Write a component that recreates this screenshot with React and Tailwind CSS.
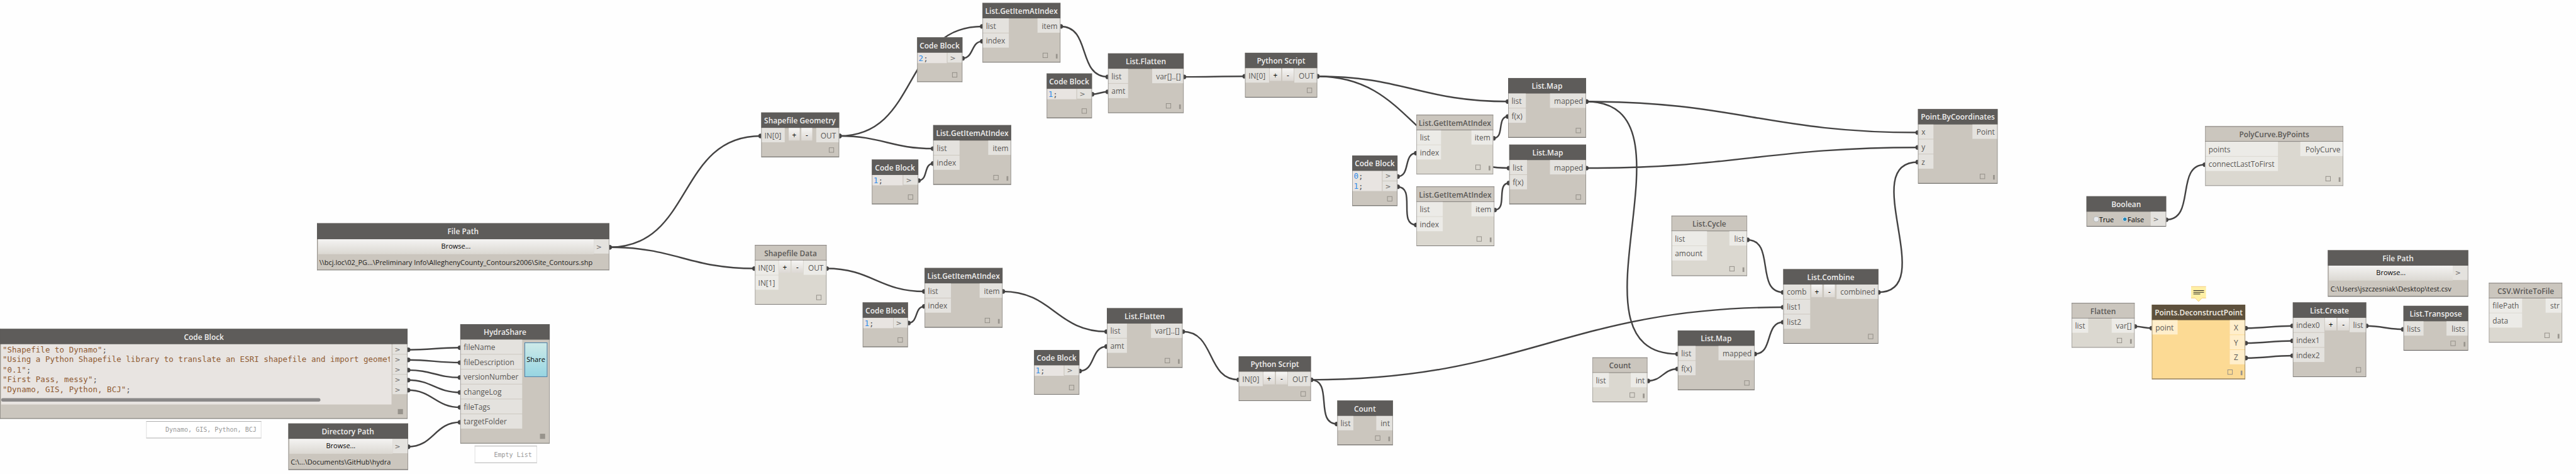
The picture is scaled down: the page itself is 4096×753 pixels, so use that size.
import React from "react";

const THEMES = {
  dark: { head: "bg-[#5e5c5a] text-[#f0efee]", body: "bg-[#cbc6be]", port: "bg-[#e4e2de]", edge: "after:border-x-[#5e5c5a]/50 after:border-b-[#5e5c5a]" },
  light: { head: "bg-[#cbc6be] text-[#5a5856] border-y border-[#7f7b78]", body: "bg-[#dbd8d0]", port: "bg-[#ecebe7]", edge: "after:border-x-[#7f7b78]/60 after:border-b-[#7f7b78]" },
  warn: { head: "bg-[#5e513d] text-[#f4f0e6]", body: "bg-[#fcda94]", port: "bg-[#ffeecb]", edge: "after:border-x-[#5e513d]/60 after:border-b-[#5e513d]" },
};

function Shell({ x, y, w, h, t = "dark", title, head = 27, children }) {
  const c = THEMES[t];
  return (
    <section
      className={`absolute flex flex-col ${c.body} after:pointer-events-none after:absolute after:inset-0 after:border-x-[1.5px] after:border-b ${c.edge}`}
      style={{ left: x, top: y, width: w, height: h }}
    >
      <header className={`flex shrink-0 items-center justify-center pt-[2px] text-[13.1px] leading-none font-semibold whitespace-nowrap ${c.head}`} style={{ height: head }}>
        {title}
      </header>
      {children}
    </section>
  );
}

function Footer({ bar, solid }) {
  return (
    <div className="mt-auto flex items-end justify-end">
      <span className={solid ? "mr-[8px] mb-[8px] size-[9.5px] bg-[#97938c]" : `mb-[8px] size-[9px] border border-[#8f8b84] ${bar ? "mr-[14px]" : "mr-[9px]"}`} />
      {bar && <span className="mr-[5px] mb-[7px] h-[8px] w-[3px] bg-[#99958e]" />}
    </div>
  );
}

function Step({ children }) {
  return (
    <span className="flex h-[22px] w-[19.5px] items-center justify-center bg-linear-to-b from-[#f6f5f4] to-[#dcd8d3] pt-[2px] text-[13px] leading-none font-medium text-black">{children}</span>
  );
}

function Node({ ins, outs, iw, ow, steps, bar, solid, t = "dark", extra, ...rest }) {
  const port = THEMES[t].port;
  return (
    <Shell t={t} {...rest}>
      <div className="flex items-start justify-between text-[13.1px] leading-none text-[#5a5856]">
        <div className="flex flex-col gap-px" style={{ width: iw }}>
          {ins.map((p) => (
            <span key={p} className={`flex h-[25px] items-center pt-[2px] pl-[6px] ${port}`}>{p}</span>
          ))}
        </div>
        {steps && (
          <div className="flex flex-1 justify-center gap-[2.5px]">
            <Step>+</Step>
            <Step>-</Step>
          </div>
        )}
        {extra}
        {outs && (
          <div className="flex flex-col gap-px" style={{ width: ow }}>
            {outs.map((p) => (
              <span key={p} className={`flex h-[25px] items-center pt-[2px] ${ow < 28 ? "justify-center pr-[6px]" : "justify-end pr-[5px]"} ${port}`}>{p}</span>
            ))}
          </div>
        )}
      </div>
      <Footer bar={bar} solid={solid} />
    </Shell>
  );
}

function Out({ h = "h-[25px]" }) {
  return <span className={`flex items-center bg-[#e4e2de] pt-[1px] pl-[4px] font-['DejaVu_Sans',sans-serif] text-[12px] leading-none text-[#6a6866] ${h}`}>&gt;</span>;
}

function CodeBlock({ x, y, h = 77.7, w = 79.3, lines, pw = 26.5 }) {
  return (
    <Shell x={x} y={y} w={w} h={h} title="Code Block">
      <div className="flex items-start">
        <div className="flex flex-1 flex-col bg-[#e8e4e1] pl-[3px] font-['DejaVu_Sans_Mono',monospace] text-[13.77px]">
          {lines.map((n) => (
            <span key={n} className="flex h-[17.6px] items-center pt-[1.4px] leading-none text-[#555]">
              <span className="text-[#2f8be8]">{n}</span>;
            </span>
          ))}
        </div>
        <div className="flex flex-col gap-px border-l border-[#cbc6be]" style={{ width: pw }}>
          {lines.map((n) => (
            <Out key={n} h="h-[17px]" />
          ))}
        </div>
      </div>
      <Footer />
    </Shell>
  );
}

function PathNode({ title, path, pw, head, ...r }) {
  return (
    <Shell title={title} head={head} {...r}>
      <div className="flex flex-1 items-start text-[12.05px] leading-none whitespace-nowrap">
        <div className="flex h-full flex-1 flex-col pl-[2px]">
          <span className="flex h-[26px] items-center justify-center bg-linear-to-b from-[#f4f3f2] to-[#dbd8d2] pb-[1.6px] text-black">Browse...</span>
          <span className="flex flex-1 items-center justify-center pt-[2.5px] text-[#1c1b1a]">{path}</span>
        </div>
        <div style={{ width: pw }}>
          <Out />
        </div>
      </div>
    </Shell>
  );
}

const SOURCE = [
  ["\"Shapefile to Dynamo\"", ";"],
  ["\"Using a Python Shapefile library to translate an ESRI shapefile and import geomet", ""],
  ["\"0.1\"", ";"],
  ["\"First Pass, messy\"", ";"],
  ["\"Dynamo, GIS, Python, BCJ\"", ";"],
];

function SourceBlock() {
  return (
    <Shell x={0} y={573} w={711.4} h={157} title="Code Block">
      <div className="flex items-start">
        <div className="ml-[2px] flex h-[105px] w-[681px] flex-col overflow-hidden bg-[#e8e4e1] font-['DejaVu_Sans_Mono',monospace] text-[13.77px]">
          {SOURCE.map(([s, e]) => (
            <span key={s} className="flex h-[17.6px] w-[677.5px] shrink-0 items-center overflow-hidden pt-[1.4px] pl-[2.3px] leading-none whitespace-pre text-[#8f5b33]">
              {s}<span className="text-[#555]">{e}</span>
            </span>
          ))}
          <span className="mt-[5.7px] h-[6.3px] w-[557px] shrink-0 rounded-[3px] bg-[#8a8888]" />
        </div>
        <div className="ml-[1.5px] flex flex-1 flex-col gap-[0.6px]">
          {SOURCE.map(([s]) => (
            <Out key={s} h="h-[17px]" />
          ))}
        </div>
      </div>
      <Footer solid />
    </Shell>
  );
}

function Bubble({ x, y, w, h, children }) {
  return (
    <div className="absolute flex items-center justify-end border border-x-[#dcdcdc] border-y-[#a8a8a8] bg-white pr-[8px] font-['DejaVu_Sans_Mono',monospace] text-[11px] leading-none whitespace-pre text-[#999]" style={{ left: x, top: y, width: w, height: h }}>
      {children}
    </div>
  );
}

function Radio({ on, children }) {
  return (
    <span className="flex items-center text-[12.1px] leading-none text-black">
      <span className="flex size-[10px] items-center justify-center rounded-full border border-[#b0b4b8] bg-[#e9ebee]">
        {on && <span className="size-[6px] rounded-full bg-[#1f86b8]" />}
      </span>
      <span className="pt-[3px]">{children}</span>
    </span>
  );
}

const WIRES = [
  [711.5, 609.7, 803, 606], [711.5, 627.3, 803, 632], [711.5, 645, 803, 658], [711.5, 662.5, 803, 684], [711.5, 680, 803, 710],
  [711.5, 778.7, 803, 736],
  [1063, 431, 1327.5, 237], [1063, 431, 1316.7, 468],
  [1464, 237, 1714, 46], [1464, 237, 1628.3, 259],
  [1678.7, 101.7, 1714, 72], [1602, 314.7, 1628.3, 285],
  [1850, 46, 1933, 134], [1904.7, 164.3, 1933, 160], [2065, 134, 2172, 133],
  [1441.7, 468, 1613, 508], [1584.4, 563, 1613, 534], [1749, 508, 1931, 578], [1883, 646.7, 1931, 604], [2063, 578, 2161.5, 662],
  [2297.6, 133, 2631, 177], [2297.6, 133, 2633, 293],
  [2437.8, 307.7, 2471, 267], [2437.8, 325.5, 2471, 392],
  [2605, 241, 2631, 203], [2607, 366, 2633, 319],
  [2767, 177, 3346, 231], [2767, 177, 2927, 617], [2767, 293, 3346, 257],
  [2286.7, 662, 3111.3, 535.5], [2286.7, 662, 2332.7, 739],
  [3048, 418, 3111.3, 509.5], [3061, 617, 3111.3, 561.5], [2874.4, 664, 2927, 643], [3276.6, 509.5, 3346, 282.5],
  [3778.6, 383, 3847, 287],
  [3724, 569, 3754.3, 572],
  [3917.3, 572, 4000, 568], [3917.3, 598, 4000, 594], [3917.3, 624, 4000, 620],
  [4127.7, 568, 4193, 574],
];

function Wires() {
  return (
    <svg className="absolute inset-0" width="4494" height="826" fill="none">
      {WIRES.map(([a, b, c, d], i) => {
        const o = 0.45 * Math.hypot(c - a, d - b);
        return (
          <g key={i}>
            <path d={`M${a} ${b}C${a + o} ${b} ${c - o} ${d} ${c} ${d}`} stroke="#444343" strokeWidth="2.7" />
            <circle cx={a + 0.5} cy={b} r="4" fill="#444343" />
            <circle cx={c - 0.5} cy={d} r="4" fill="#444343" />
          </g>
        );
      })}
    </svg>
  );
}

const GI = { title: "List.GetItemAtIndex", ins: ["list", "index"], outs: ["item"], iw: 46, ow: 40, w: 136, h: 104, bar: true };
const FL = { title: "List.Flatten", ins: ["list", "amt"], outs: ["var[]..[]"], iw: 35.4, ow: 55, w: 132, h: 104, bar: true };
const PY = { title: "Python Script", ins: ["IN[0]"], outs: ["OUT"], iw: 41.7, ow: 39.7, w: 125.4, h: 78, steps: true };
const MP = { title: "List.Map", ins: ["list", "f(x)"], outs: ["mapped"], iw: 30.7, ow: 63, w: 134, h: 104 };

export default function App() {
  return (
    <div className="h-[753px] w-[4096px] overflow-hidden bg-[#fefefe]">
      <main className="relative h-[826px] w-[4494px] origin-top-left scale-[0.91144] font-['Open_Sans',sans-serif]">
        <Wires />
        <SourceBlock />
        <Bubble x={255.4} y={734.3} w={201} h={30}>Dynamo, GIS, Python, BCJ</Bubble>
        <PathNode x={502.5} y={738} w={209} h={81} pw={27} title="Directory Path" path={"C:\\...\\Documents\\GitHub\\hydra"} />
        <PathNode x={553} y={389} w={509.5} h={82} head={28} pw={26.7} title="File Path" path={"\\\\bcj.loc\\02_PG...\\Preliminary Info\\AlleghenyCounty_Contours2006\\Site_Contours.shp"} />
        <Node
          x={803} y={565} w={156} h={208} title="HydraShare" iw={108.2} solid
          ins={["fileName", "fileDescription", "versionNumber", "changeLog", "fileTags", "targetFolder"]}
          extra={<button className="mt-[5px] mr-[4.4px] h-[60px] w-[39.5px] border border-[#3a78a6] bg-linear-to-b from-[#cdeae8] to-[#97d5e2] text-[12.05px] text-black">Share</button>}
        />
        <Bubble x={828} y={777} w={109} h={30}>Empty List</Bubble>

        <Node {...PY} x={1327.5} y={196} w={136} title="Shapefile Geometry" />
        <Node {...PY} x={1316.7} y={427} w={125} h={104} t="light" title="Shapefile Data" ins={["IN[0]", "IN[1]"]} />

        <Node {...GI} x={1714} y={5} />
        <CodeBlock x={1599.5} y={65} lines={["2"]} />
        <CodeBlock x={1825.6} y={128} lines={["1"]} />
        <Node {...FL} x={1933} y={93} />
        <Node {...GI} x={1628.3} y={218} />
        <CodeBlock x={1520.8} y={278} w={81.2} lines={["1"]} />

        <Node {...GI} x={1613} y={467} />
        <CodeBlock x={1505} y={527} lines={["1"]} />
        <Node {...FL} x={1931} y={537} />
        <CodeBlock x={1803.5} y={610} lines={["1"]} />
        <Node {...PY} x={2161.3} y={621} />
        <Node x={2332.7} y={698} w={97} h={78} title="Count" ins={["list"]} outs={["int"]} iw={28.7} ow={29} bar />

        <Node {...PY} x={2172.2} y={92} />
        <Node {...GI} x={2471} y={200} w={134} iw={43.4} ow={38} t="light" />
        <Node {...GI} x={2470.8} y={325} t="light" />
        <CodeBlock x={2358.7} y={271} h={88} lines={["0", "1"]} />
        <Node {...MP} x={2631} y={136} w={136} />
        <Node {...MP} x={2633} y={252} />

        <Node x={2916} y={376} w={132} h={104.7} t="light" title="List.Cycle" ins={["list", "amount"]} outs={["list"]} iw={61.7} ow={30.8} bar />
        <Node x={2778} y={623} w={96.4} h={78} t="light" title="Count" ins={["list"]} outs={["int"]} iw={28.7} ow={29} bar />
        <Node {...MP} x={2927} y={576} />
        <Node x={3111.3} y={469} w={165.3} h={130} title="List.Combine" ins={["comb", "list1", "list2"]} outs={["combined"]} iw={46.3} ow={73} steps />
        <Node x={3346} y={190} w={139} h={130} title="Point.ByCoordinates" ins={["x", "y", "z"]} outs={["Point"]} iw={26.8} ow={44.3} bar />

        <Shell x={3640} y={342} w={138.6} h={53} title="Boolean">
          <div className="flex items-center">
            <div className="flex flex-1 items-center gap-[14px] pl-[12px]">
              <Radio>True</Radio>
              <Radio on>False</Radio>
            </div>
            <div className="w-[26.5px]"><Out /></div>
          </div>
        </Shell>
        <Node x={3847} y={220} w={241} h={104} t="light" title="PolyCurve.ByPoints" ins={["points", "connectLastToFirst"]} outs={["PolyCurve"]} iw={127} ow={75} bar />

        <Node x={3614} y={528} w={110} h={78} t="light" title="Flatten" ins={["list"]} outs={["var[]"]} iw={28.7} ow={39.7} bar />
        <svg className="absolute top-[498px] left-[3822px]" width="28" height="30">
          <path d="M.5 1.5H26.5V21.5H19.5L13.5 27.5L7.5 21.5H.5Z" fill="#fff0a6" />
          <path d="M.5 1.5H26.5M.5 21.5H7.5L13.5 27.5L19.5 21.5H26.5" fill="none" stroke="#f3c873" />
          <path d="M4.5 8.3H23M4.5 11.3H23M4.5 14.3H16.5" stroke="#222" strokeWidth="1.1" />
        </svg>
        <Node x={3754.3} y={531} w={163} h={130} t="warn" title="Points.DeconstructPoint" ins={["point"]} outs={["X", "Y", "Z"]} iw={44.3} ow={27} bar />
        <Node x={4000} y={527} w={127.7} h={130} title="List.Create" ins={["index0", "index1", "index2"]} outs={["list"]} iw={55.3} ow={28.7} steps />
        <PathNode x={4061.3} y={436} w={244.4} h={81} pw={26.7} title="File Path" path={"C:\\Users\\jszczesniak\\Desktop\\test.csv"} />
        <Node x={4193} y={533} w={112.7} h={78} title="List.Transpose" ins={["lists"]} outs={["lists"]} iw={35.3} ow={38} bar />
        <Node x={4342.3} y={493} w={128} h={104} t="light" title="CSV.WriteToFile" ins={["filePath", "data"]} outs={["str"]} iw={57.3} ow={29.3} bar />
      </main>
    </div>
  );
}
